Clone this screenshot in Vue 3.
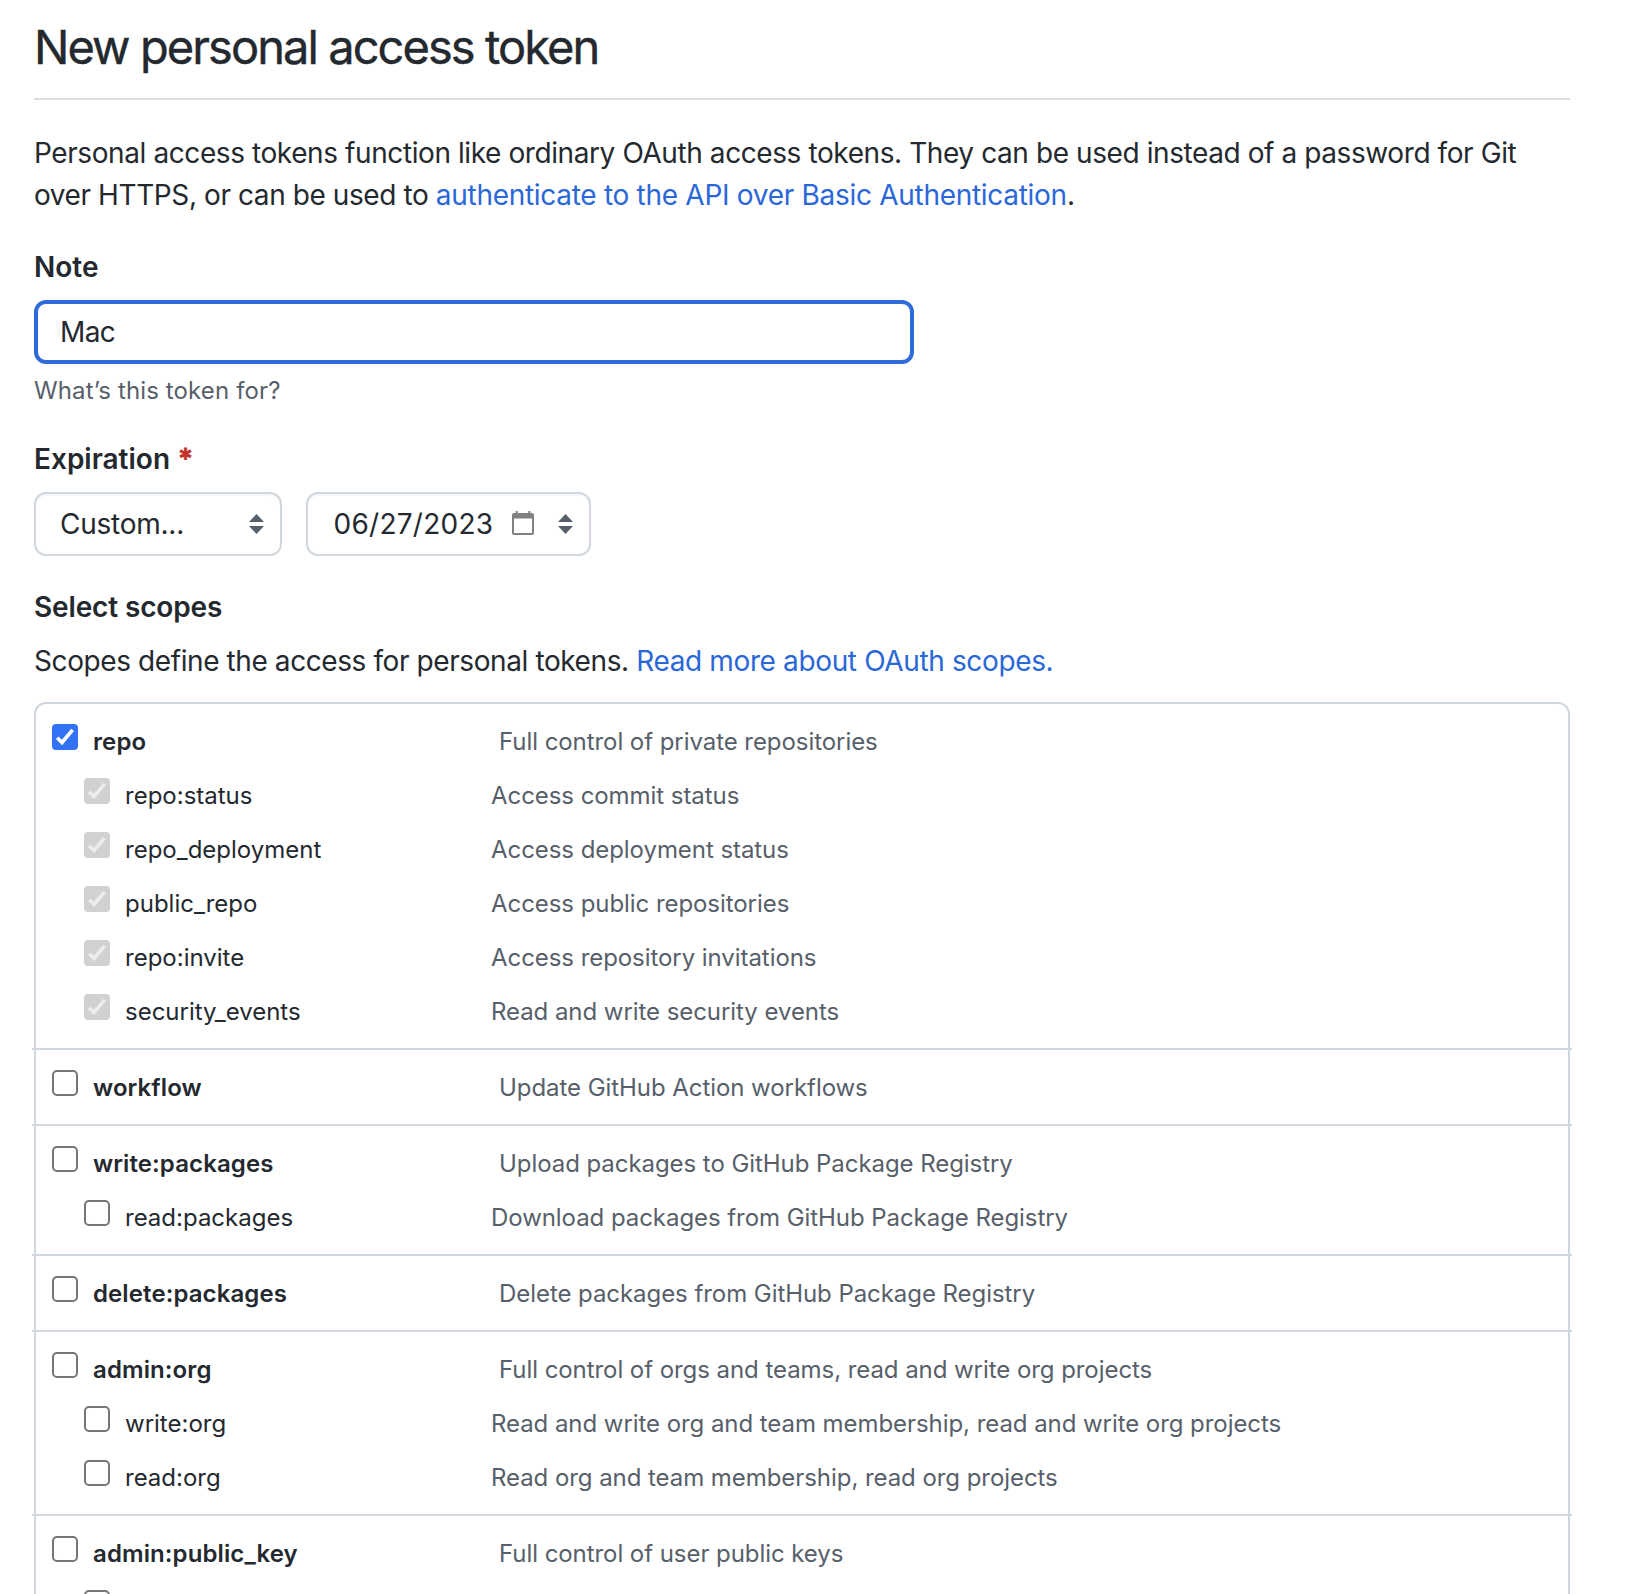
<script setup>
const groups = [
  {
    name: 'repo', desc: 'Full control of private repositories', checked: true,
    children: [
      { name: 'repo:status', desc: 'Access commit status' },
      { name: 'repo_deployment', desc: 'Access deployment status' },
      { name: 'public_repo', desc: 'Access public repositories' },
      { name: 'repo:invite', desc: 'Access repository invitations' },
      { name: 'security_events', desc: 'Read and write security events' },
    ],
  },
  { name: 'workflow', desc: 'Update GitHub Action workflows', children: [] },
  {
    name: 'write:packages', desc: 'Upload packages to GitHub Package Registry',
    children: [{ name: 'read:packages', desc: 'Download packages from GitHub Package Registry' }],
  },
  { name: 'delete:packages', desc: 'Delete packages from GitHub Package Registry', children: [] },
  {
    name: 'admin:org', desc: 'Full control of orgs and teams, read and write org projects',
    children: [
      { name: 'write:org', desc: 'Read and write org and team membership, read and write org projects' },
      { name: 'read:org', desc: 'Read org and team membership, read org projects' },
    ],
  },
  {
    name: 'admin:public_key', desc: 'Full control of user public keys',
    children: [{ name: '', desc: '' }],
  },
]
</script>

<template>
  <main class="page">
    <h1 class="title">New personal access token</h1>
    <p class="intro">
      Personal access tokens function like ordinary OAuth access tokens. They can be used instead of a password for Git<br>
      over HTTPS, or can be used to <a class="auth">authenticate to the API over Basic Authentication</a>.
    </p>

    <label class="label" for="note">Note</label>
    <input id="note" class="note" type="text" value="Mac">
    <p class="hint">What’s this token for?</p>

    <div class="label">Expiration <span class="required">*</span></div>
    <div class="expiration">
      <div class="select period">
        <span class="custom">Custom...</span>
        <svg class="arrows" width="15" height="20" viewBox="0 0 15 20"><path d="M7.5 0 15 8H0zM0 12h15l-7.5 8z" /></svg>
      </div>
      <div class="select date">
        <span class="date-text">06/27/2023</span>
        <svg class="calendar" width="22" height="24" viewBox="0 0 22 24">
          <path fill-rule="evenodd" d="M3.7 0h2v2h10.600V0h2v2H20a2 2 0 0 1 2 2v18a2 2 0 0 1-2 2H2a2 2 0 0 1-2-2V4a2 2 0 0 1 2-2h1.700zM2 7.500V22h18V7.500z" />
        </svg>
        <svg class="arrows" width="15" height="20" viewBox="0 0 15 20"><path d="M7.5 0 15 8H0zM0 12h15l-7.5 8z" /></svg>
      </div>
    </div>

    <div class="label select-scopes">Select scopes</div>
    <p class="scopes-intro">Scopes define the access for personal tokens. <a class="more">Read more about OAuth scopes.</a></p>

    <ul class="scopes">
      <li v-for="g in groups" :key="g.name" class="group">
        <div class="row parent">
          <span class="box" :class="{ checked: g.checked }">
            <svg v-if="g.checked" viewBox="0 0 26 26"><path d="M5.2 13.800 10 18.500 20.600 5.800" /></svg>
          </span>
          <span class="name">{{ g.name }}</span>
          <span class="desc">{{ g.desc }}</span>
        </div>
        <div v-for="c in g.children" :key="c.name" class="row child">
          <span class="box" :class="{ disabled: g.checked }">
            <svg v-if="g.checked" viewBox="0 0 26 26"><path d="M5.2 13.800 10 18.500 20.600 5.800" /></svg>
          </span>
          <span class="name">{{ c.name }}</span>
          <span class="desc">{{ c.desc }}</span>
        </div>
      </li>
    </ul>
  </main>
</template>

<style>
html, body { margin: 0; background: #fff; }
</style>

<style scoped>
* { box-sizing: border-box; }
.page {
  width: 1646px;
  height: 1594px;
  overflow: hidden;
  padding: 0 76px 0 34px;
  font: 400 28px/42px Inter, "Liberation Sans", sans-serif;
  color: #24292f;
}
p, ul, h1 { margin: 0; padding: 0; }
a { color: #2a67d9; }
.title {
  height: 100px;
  padding-top: 11px;
  border-bottom: 2px solid #d8dee4;
  font-size: 47px;
  font-weight: 400;
  line-height: 72px;
  letter-spacing: -1.93px;
  -webkit-text-stroke: 0.4px currentColor;
}
.intro { margin-top: 32px; letter-spacing: -0.41px; white-space: nowrap; }
.auth { letter-spacing: -0.29px; }
.label { display: block; margin-top: 30px; font-weight: 600; }
.note {
  display: block;
  width: 880px;
  height: 64px;
  margin-top: 12px;
  padding: 0 22px;
  border: 4px solid #2f6bdb;
  border-radius: 12px;
  background: #fff;
  outline: none;
  font: inherit;
  letter-spacing: -0.6px;
  color: inherit;
}
.hint { margin-top: 9px; font-size: 24px; line-height: 36px; letter-spacing: 0.13px; color: #57606a; }
.hint + .label { margin-top: 29px; }
.required { margin-left: 1px; color: #c4302b; -webkit-text-stroke: 0.8px currentColor; }
.expiration { display: flex; gap: 24px; margin-top: 12px; }
.select {
  display: flex;
  align-items: center;
  height: 64px;
  padding: 0 16.5px 0 24px;
  border: 2px solid #d0d7de;
  border-radius: 12px;
  box-shadow: inset 0 2px 0 rgba(208, 215, 222, 0.2);
}
.period { width: 248px; justify-content: space-between; }
.date { width: 285px; padding-left: 25.5px; }
.custom { letter-spacing: -0.25px; }
.date-text { letter-spacing: 0.26px; }
.calendar { margin: 0 auto 0 19px; fill: #808080; position: relative; top: -1px; }
.arrows { fill: #57606a; }
.select-scopes { letter-spacing: -0.14px; }
.scopes-intro { margin-top: 12px; letter-spacing: -0.407px; white-space: nowrap; }
.more { letter-spacing: -0.36px; }
.scopes {
  height: 1000px;
  margin-top: 20px;
  border: 2px solid #d0d7de;
  border-radius: 12px;
  list-style: none;
  font-size: 24px;
  line-height: 35px;
}
.group { margin: 0 -4px; padding: 20px 20px 0; }
.group + .group { border-top: 2px solid #d0d7de; }
.row { display: flex; height: 54px; }
.child { padding-left: 32px; }
.box {
  flex: none;
  width: 26px;
  height: 26px;
  border: 2px solid #767676;
  border-radius: 5px;
}
.box svg { display: block; width: 26px; height: 26px; fill: none; stroke: #fff; stroke-width: 3.6; }
.checked { border: 0; border-radius: 4px; background: #3273f6; }
.disabled { border: 0; border-radius: 4px; background: #d1d1d1; }
.disabled svg { stroke: #ececec; }
.name { padding-left: 15px; }
.parent .name { width: 421px; font-weight: 600; letter-spacing: 0.1px; }
.child .name { width: 381px; }
.desc { color: #57606a; white-space: nowrap; letter-spacing: -0.06px; }
</style>
